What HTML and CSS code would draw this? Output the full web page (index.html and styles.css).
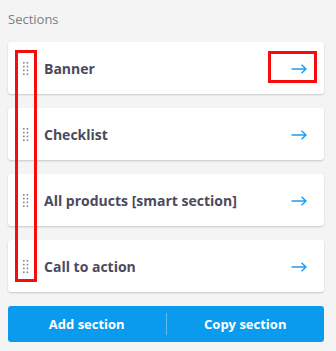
FILE: index.html
```html
<!DOCTYPE html>
<html lang="en">
<head>
    <meta charset="UTF-8">
    <meta name="viewport" content="width=device-width, initial-scale=1.0">
    <title>Sections</title>
    <link rel="stylesheet" href="styles.css">
</head>
<body>
    <div class="panel">
        <div class="panel-title">Sections</div>

        <ul class="section-list">
            <li class="section-card">
                <svg class="handle" width="6" height="14" viewBox="0 0 6 14"><g fill="#84848c"><rect x="0" y="0" width="1.6" height="1.6"/><rect x="3.6" y="0" width="1.6" height="1.6"/><rect x="0" y="3.8" width="1.6" height="1.6"/><rect x="3.6" y="3.8" width="1.6" height="1.6"/><rect x="0" y="7.6" width="1.6" height="1.6"/><rect x="3.6" y="7.6" width="1.6" height="1.6"/><rect x="0" y="11.4" width="1.6" height="1.6"/><rect x="3.6" y="11.4" width="1.6" height="1.6"/></g></svg>
                <span class="section-name">Banner</span>
                <svg class="go" width="16" height="10" viewBox="0 0 16 10"><path d="M0.5 5H15M10.5 0.8L15 5l-4.5 4.2" fill="none" stroke="#1c9ff0" stroke-width="1.4"/></svg>
            </li>
            <li class="section-card">
                <svg class="handle" width="6" height="14" viewBox="0 0 6 14"><g fill="#84848c"><rect x="0" y="0" width="1.6" height="1.6"/><rect x="3.6" y="0" width="1.6" height="1.6"/><rect x="0" y="3.8" width="1.6" height="1.6"/><rect x="3.6" y="3.8" width="1.6" height="1.6"/><rect x="0" y="7.6" width="1.6" height="1.6"/><rect x="3.6" y="7.6" width="1.6" height="1.6"/><rect x="0" y="11.4" width="1.6" height="1.6"/><rect x="3.6" y="11.4" width="1.6" height="1.6"/></g></svg>
                <span class="section-name">Checklist</span>
                <svg class="go" width="16" height="10" viewBox="0 0 16 10"><path d="M0.5 5H15M10.5 0.8L15 5l-4.5 4.2" fill="none" stroke="#1c9ff0" stroke-width="1.4"/></svg>
            </li>
            <li class="section-card">
                <svg class="handle" width="6" height="14" viewBox="0 0 6 14"><g fill="#84848c"><rect x="0" y="0" width="1.6" height="1.6"/><rect x="3.6" y="0" width="1.6" height="1.6"/><rect x="0" y="3.8" width="1.6" height="1.6"/><rect x="3.6" y="3.8" width="1.6" height="1.6"/><rect x="0" y="7.6" width="1.6" height="1.6"/><rect x="3.6" y="7.6" width="1.6" height="1.6"/><rect x="0" y="11.4" width="1.6" height="1.6"/><rect x="3.6" y="11.4" width="1.6" height="1.6"/></g></svg>
                <span class="section-name">All products [smart section]</span>
                <svg class="go" width="16" height="10" viewBox="0 0 16 10"><path d="M0.5 5H15M10.5 0.8L15 5l-4.5 4.2" fill="none" stroke="#1c9ff0" stroke-width="1.4"/></svg>
            </li>
            <li class="section-card">
                <svg class="handle" width="6" height="14" viewBox="0 0 6 14"><g fill="#84848c"><rect x="0" y="0" width="1.6" height="1.6"/><rect x="3.6" y="0" width="1.6" height="1.6"/><rect x="0" y="3.8" width="1.6" height="1.6"/><rect x="3.6" y="3.8" width="1.6" height="1.6"/><rect x="0" y="7.6" width="1.6" height="1.6"/><rect x="3.6" y="7.6" width="1.6" height="1.6"/><rect x="0" y="11.4" width="1.6" height="1.6"/><rect x="3.6" y="11.4" width="1.6" height="1.6"/></g></svg>
                <span class="section-name">Call to action</span>
                <svg class="go" width="16" height="10" viewBox="0 0 16 10"><path d="M0.5 5H15M10.5 0.8L15 5l-4.5 4.2" fill="none" stroke="#1c9ff0" stroke-width="1.4"/></svg>
            </li>
        </ul>

        <div class="actions">
            <button class="action-btn">Add section</button>
            <button class="action-btn">Copy section</button>
        </div>

        <!-- highlight marks -->
        <div class="mark mark-handles"></div>
        <div class="mark mark-arrow"></div>
    </div>
</body>
</html>
```

FILE: styles.css
```css
* {
    margin: 0;
    padding: 0;
    box-sizing: border-box;
}

body {
    font-family: 'Open Sans', 'Noto Sans', Arial, sans-serif;
    background: #f4f4f4;
    width: 336px;
    height: 351px;
    overflow: hidden;
}

.panel {
    position: relative;
    padding: 8px 12px 8px 8px;
}

.panel-title {
    font-size: 13px;
    color: #7d7d87;
    line-height: 18px;
    height: 34px;
    padding-top: 2px;
}

.section-list {
    list-style: none;
    display: flex;
    flex-direction: column;
    gap: 14px;
}

.section-card {
    height: 52px;
    background: #fff;
    border-radius: 3px;
    box-shadow: 0 1px 2px rgba(0,0,0,0.18);
    display: flex;
    align-items: center;
    padding: 0 17px 0 15px;
}

.handle {
    flex-shrink: 0;
    margin-right: 15px;
    margin-top: 2px;
}

.section-name {
    flex: 1;
    font-size: 14px;
    font-weight: 700;
    color: #4b4a5e;
}

.go {
    flex-shrink: 0;
    margin-top: 1px;
}

.actions {
    margin-top: 14px;
    height: 36px;
    background: #0a9bef;
    border-radius: 3px;
    display: flex;
    align-items: center;
}

.action-btn {
    flex: 1;
    background: none;
    border: none;
    color: #fff;
    font-family: inherit;
    font-size: 13px;
    font-weight: 700;
    height: 22px;
    cursor: pointer;
}

.action-btn + .action-btn {
    border-left: 1px solid rgba(255,255,255,0.35);
}

.mark {
    position: absolute;
    border: 3px solid #f50d0d;
}

.mark-handles {
    left: 15px;
    top: 50px;
    width: 22px;
    height: 232px;
}

.mark-arrow {
    left: 268px;
    top: 51px;
    width: 49px;
    height: 32px;
}
```
